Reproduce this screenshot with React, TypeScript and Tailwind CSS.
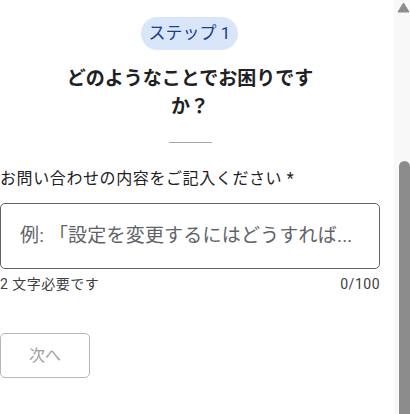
import React from "react";

export default function App() {
  return (
    <div
      className="flex w-[410px] h-[414px] overflow-hidden bg-white"
      style={{ fontFamily: 'Roboto, "Noto Sans CJK JP", sans-serif' }}
    >
      <div className="w-[380px] shrink-0 flex flex-col">
        <div className="pt-[17px] flex justify-center">
          <div className="h-[33px] px-[8px] rounded-full bg-[#d9e5f8] text-[#1a3f8f] text-[17px] leading-[33px] ml-[-1px]">
            ステップ 1
          </div>
        </div>
        <div className="mt-[15px] w-[262px] mx-auto text-center text-[19px] leading-[28px] font-bold text-[#202124]">
          どのようなことでお困りですか？
        </div>
        <div className="mt-[21px] mx-auto h-px w-[43px] bg-[#a8a8a8]" />
        <div className="mt-[25px] text-[16px] leading-[22px] tracking-[0.6px] text-[#202124]">
          お問い合わせの内容をご記入ください *
        </div>
        <div className="mt-[13px] h-[66px] border border-[#5f6368] rounded-[5px] flex items-center px-[19px] text-[19px] tracking-[0.2px] text-[#5f6368] whitespace-nowrap">
          例:&nbsp;「設定を変更するにはどうすれば...
        </div>
        <div className="mt-[5px] flex justify-between text-[14px] leading-[20px] tracking-[0.5px] text-[#3c4043]">
          <span>2 文字必要です</span>
          <span>0/100</span>
        </div>
        <div className="mt-[39px] w-[90px] h-[45px] border border-[#b5b5b5] rounded-[5px] flex items-center justify-center text-[16px] text-[#a0a0a0]">
          次へ
        </div>
      </div>
      <div className="w-[14px] shrink-0" />
      <div className="w-[16px] shrink-0 bg-[#f8f8f8] flex flex-col">
        <svg width="16" height="14" viewBox="0 0 16 14" className="mt-[1px]">
          <path d="M4 11 L9.5 2 L15 11 Z" fill="#8c8c8c" stroke="#8c8c8c" strokeWidth="1" strokeLinejoin="round" />
        </svg>
        <div className="h-[146px]" />
        <div className="ml-[5px] flex-1 bg-[#8c8c8c] rounded-t-[6px]" />
      </div>
    </div>
  );
}
